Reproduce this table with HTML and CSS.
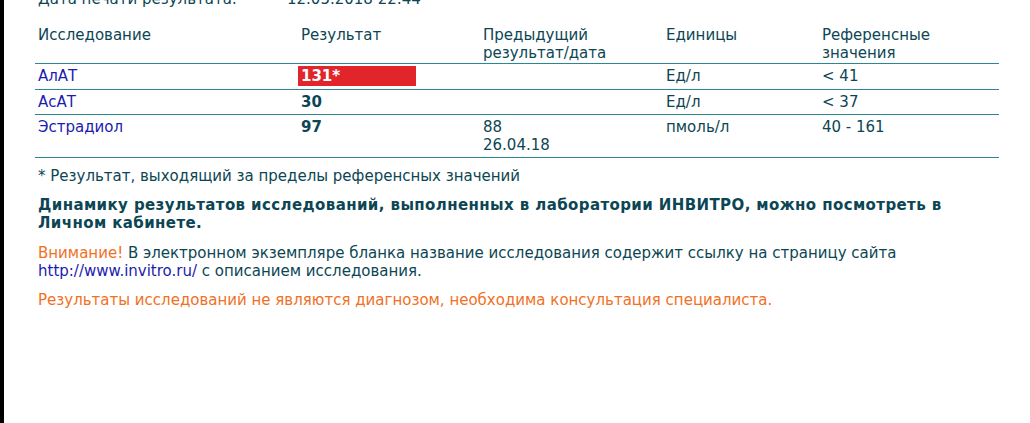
FILE: index.html
```html
<!DOCTYPE html>
<html lang="ru">
<head>
<meta charset="utf-8">
<title>Результаты исследований</title>
<link rel="stylesheet" href="styles.css">
</head>
<body>
<div class="frame">
  <div class="sheet">
    <div class="print-row">
      <span class="print-label">Дата печати результата:</span>
      <span class="print-value">12.05.2018 22:44</span>
    </div>
    <table class="results">
      <colgroup>
        <col class="c1"><col class="c2"><col class="c3"><col class="c4"><col class="c5">
      </colgroup>
      <thead>
        <tr>
          <th>Исследование</th>
          <th>Результат</th>
          <th>Предыдущий<br>результат/дата</th>
          <th>Единицы</th>
          <th>Референсные<br>значения</th>
        </tr>
      </thead>
      <tbody>
        <tr>
          <td><a class="test-link" href="#">АлАТ</a></td>
          <td><span class="value value-out">131*</span></td>
          <td></td>
          <td>Ед/л</td>
          <td>&lt; 41</td>
        </tr>
        <tr>
          <td><a class="test-link" href="#">АсАТ</a></td>
          <td><span class="value">30</span></td>
          <td></td>
          <td>Ед/л</td>
          <td>&lt; 37</td>
        </tr>
        <tr>
          <td><a class="test-link" href="#">Эстрадиол</a></td>
          <td><span class="value">97</span></td>
          <td>88<br>26.04.18</td>
          <td>пмоль/л</td>
          <td>40 - 161</td>
        </tr>
      </tbody>
    </table>
    <p class="note">* Результат, выходящий за пределы референсных значений</p>
    <p class="dynamics">Динамику результатов исследований, выполненных в лаборатории ИНВИТРО, можно посмотреть в Личном кабинете.</p>
    <p class="attention"><span class="warn">Внимание!</span> В электронном экземпляре бланка название исследования содержит ссылку на страницу сайта <a class="site-link" href="#">http://www.invitro.ru/</a> с описанием исследования.</p>
    <p class="disclaimer">Результаты исследований не являются диагнозом, необходима консультация специалиста.</p>
  </div>
</div>
</body>
</html>
```

FILE: styles.css
```css
html, body {
  margin: 0;
  padding: 0;
  background: #ffffff;
}

body {
  font-family: "DejaVu Sans", sans-serif;
  font-size: 15px;
  line-height: 18px;
  color: #0c4654;
  overflow: hidden;
}

.frame {
  display: flow-root;
  border-left: 4px solid #000000;
  height: 423px;
  box-sizing: border-box;
}

.sheet {
  width: 964px;
  margin-left: 31px;
}

.print-row {
  display: flex;
  margin-top: -10px;
  height: 18px;
  padding-left: 3px;
}

.print-label {
  width: 249px;
}

.results {
  width: 964px;
  border-collapse: collapse;
  table-layout: fixed;
  margin-top: 15px;
}

.c1 { width: 263px; }
.c2 { width: 182px; }
.c3 { width: 183px; }
.c4 { width: 156px; }
.c5 { width: 180px; }

.results th {
  font-weight: normal;
  text-align: left;
  vertical-align: top;
  padding: 3px 3px 1px 3px;
  border-bottom: 1px solid #2b8795;
}

.results td {
  vertical-align: top;
  padding: 3px 3px 3px 3px;
  border-bottom: 1px solid #2b8795;
}

.test-link {
  color: #1c1cae;
  text-decoration: none;
}

.value {
  font-weight: bold;
}

.value-out {
  display: inline-block;
  box-sizing: border-box;
  width: 118px;
  margin: -2px 0 0 -3px;
  padding-left: 3px;
  line-height: 20px;
  background: #e2242b;
  color: #ffffff;
}

p {
  margin: 0;
  padding-left: 3px;
}

.note {
  margin-top: 9px;
}

.dynamics {
  margin-top: 11px;
  font-weight: bold;
  letter-spacing: 0.4px;
  width: 930px;
}

.attention {
  margin-top: 12px;
}

.warn {
  color: #f0711f;
}

.site-link {
  color: #1c1cae;
  text-decoration: none;
}

.disclaimer {
  margin-top: 11px;
  color: #f0711f;
}
```
